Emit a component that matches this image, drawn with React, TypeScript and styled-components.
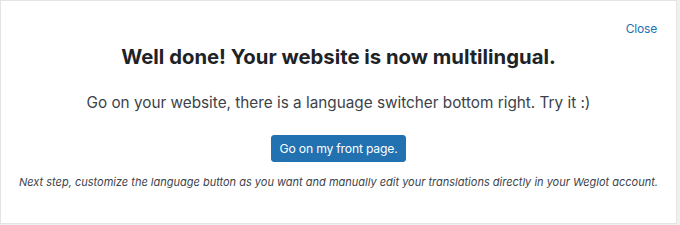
import React from 'react';
import styled, { createGlobalStyle } from 'styled-components';

const GlobalStyle = createGlobalStyle`
  html, body {
    margin: 0;
    padding: 0;
    background: #f0f0f1;
  }
  body {
    font-family: Inter, "Noto Sans", sans-serif;
    color: #1d2327;
    -webkit-font-smoothing: antialiased;
  }
`;

const Panel = styled.div`
  box-sizing: border-box;
  width: 677px;
  height: 224px;
  background: #fff;
  border: 1px solid #e4e4e6;
  padding: 20px 19px 0 19px;
  display: flex;
  flex-direction: column;
  align-items: center;
`;

const TopBar = styled.div`
  align-self: stretch;
  display: flex;
  justify-content: flex-end;
  height: 16px;
`;

const CloseLink = styled.a`
  font-size: 12px;
  line-height: 16px;
  letter-spacing: -0.2px;
  color: #2271b1;
  text-decoration: none;
  cursor: pointer;
`;

const Title = styled.h2`
  margin: 7px 0 0;
  font-size: 20.3px;
  line-height: 26px;
  font-weight: 700;
  color: #1d2327;
`;

const Lead = styled.p`
  margin: 23px 0 0;
  font-size: 15.3px;
  line-height: 20px;
  color: #3c434a;
`;

const PrimaryButton = styled.a`
  box-sizing: border-box;
  margin-top: 22px;
  height: 27px;
  padding: 0 8px;
  display: inline-flex;
  align-items: center;
  background: #2271b1;
  border: 1px solid #2271b1;
  border-radius: 3px;
  color: #fff;
  font-size: 12.2px;
  letter-spacing: -0.2px;
  text-decoration: none;
  cursor: pointer;
`;

const Hint = styled.p`
  margin: 12px 0 0;
  font-size: 11px;
  line-height: 16px;
  font-style: italic;
  white-space: nowrap;
  color: #3c434a;
`;

export default function App() {
  return (
    <>
      <GlobalStyle />
      <Panel>
        <TopBar>
          <CloseLink>Close</CloseLink>
        </TopBar>
        <Title>Well done! Your website is now multilingual.</Title>
        <Lead>Go on your website, there is a language switcher bottom right. Try it :)</Lead>
        <PrimaryButton>Go on my front page.</PrimaryButton>
        <Hint>
          Next step, customize the language button as you want and manually edit your translations
          directly in your Weglot account.
        </Hint>
      </Panel>
    </>
  );
}
